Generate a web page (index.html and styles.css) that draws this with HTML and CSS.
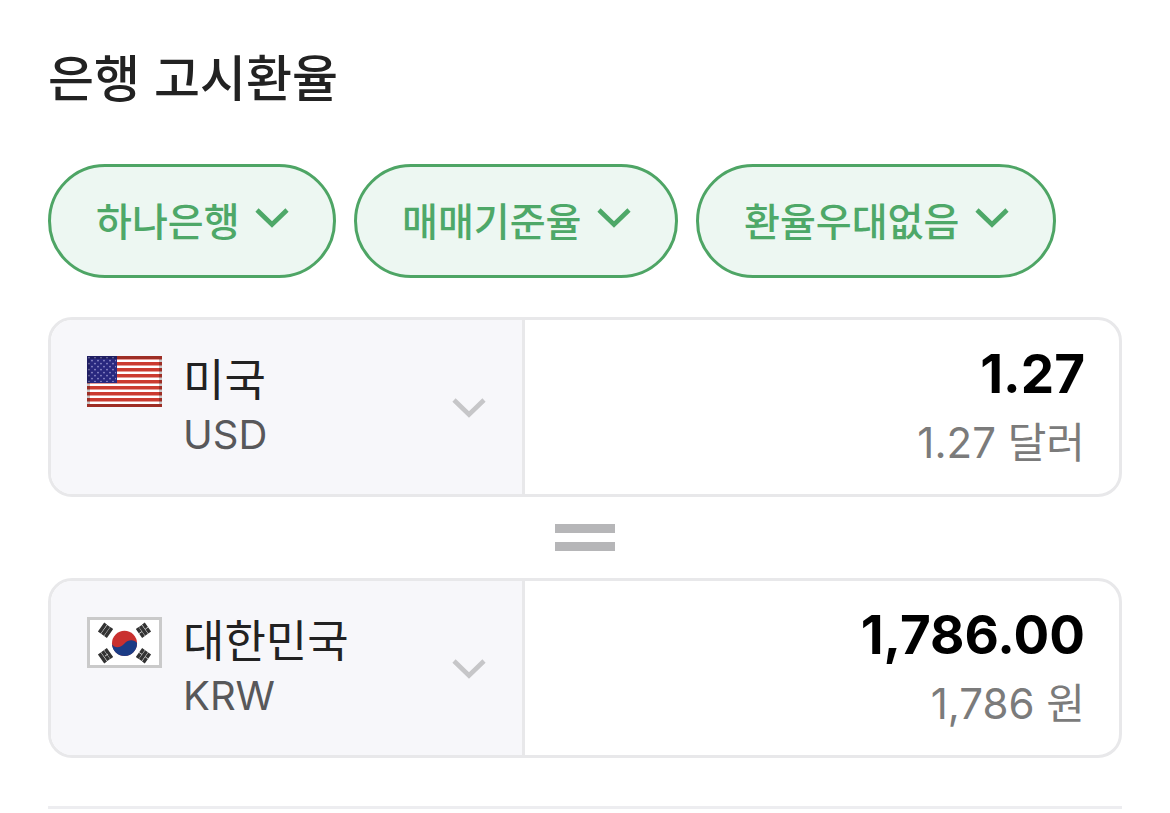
FILE: index.html
```html
<!DOCTYPE html>
<html lang="ko">
<head>
<meta charset="utf-8">
<meta name="viewport" content="width=device-width, initial-scale=1">
<title>은행 고시환율</title>
<link rel="stylesheet" href="styles.css">
</head>
<body>
<svg class="defs" aria-hidden="true">
  <symbol id="chevron" viewBox="0 0 34 22"><path d="M2 2 17 16.500 32 2" fill="none" stroke="currentColor" stroke-width="4.600"/></symbol>
</svg>
<main class="exchange">
  <h1 class="title">은행 고시환율</h1>
  <div class="filters">
    <label class="pill">
      <select class="pill-select" aria-label="은행"><option>하나은행</option></select>
      <svg class="chevron" aria-hidden="true"><use href="#chevron"/></svg>
    </label>
    <label class="pill">
      <select class="pill-select" aria-label="환율 종류"><option>매매기준율</option></select>
      <svg class="chevron" aria-hidden="true"><use href="#chevron"/></svg>
    </label>
    <label class="pill">
      <select class="pill-select" aria-label="환율우대"><option>환율우대없음</option></select>
      <svg class="chevron" aria-hidden="true"><use href="#chevron"/></svg>
    </label>
  </div>

  <section class="card">
    <label class="country">
      <svg class="flag" viewBox="0 0 75 51" aria-hidden="true">
        <defs>
          <pattern id="stars" width="6" height="6" patternUnits="userSpaceOnUse">
            <circle cx="2" cy="1.6" r=".9" fill="#8f8cc9"/><circle cx="5" cy="4.6" r=".9" fill="#8f8cc9"/>
          </pattern>
        </defs>
        <path fill="#fff" d="M0 0h75v51H0z"/>
        <path fill="#cb3b30" d="M0 0h75v3.500H0zM0 6h75v3.500H0zM0 12h75v3.500H0zM0 18h75v3.500H0zM0 24h75v3.500H0zM0 30h75v3.500H0zM0 36h75v3.500H0zM0 42h75v3.500H0zM0 48h75v3H0z"/>
        <path fill="#29287f" d="M0 0h30v27H0z"/>
        <path fill="url(#stars)" d="M1 1h28v25H1z"/>
        <path fill="none" stroke="#000" stroke-opacity=".22" stroke-width="3" d="M1.500 1.500h72v48h-72z"/>
      </svg>
      <span class="names">
        <select class="name" aria-label="통화"><option>미국</option></select>
        <span class="code">USD</span>
      </span>
      <svg class="chevron" aria-hidden="true"><use href="#chevron"/></svg>
    </label>
    <div class="amount">
      <input class="value" type="text" inputmode="decimal" value="1.27" aria-label="달러 금액">
      <p class="unit">1.27 달러</p>
    </div>
  </section>

  <div class="equals" role="img" aria-label="같음"></div>

  <section class="card">
    <label class="country">
      <svg class="flag" viewBox="0 0 75 51" aria-hidden="true">
        <path fill="#fff" stroke="#cacaca" stroke-width="3" d="M1.500 1.500h72v48h-72z"/>
        <circle cx="37.500" cy="26.300" r="12.500" fill="#c9302f"/>
        <path fill="#1b3c86" d="M25 27c3 5 9 3.500 12.500-.5s9.500-4.500 12.500-.5a12.500 12.500 0 0 1-25 1z"/>
        <g stroke="#333" stroke-width="3.400">
          <path d="M12.300 15.500 18.600 6.600M15.400 17.800l6.300-8.900M18.500 20l6.300-8.900"/>
          <path d="M62.700 15.500 56.400 6.600M59.600 17.800l-6.300-8.900M56.500 20l-6.300-8.900"/>
          <path d="M12.300 36.500l6.300 8.900M15.400 34.200l6.300 8.900M18.500 32l6.300 8.900"/>
          <path d="M62.700 36.500l-6.300 8.900M59.600 34.200l-6.300 8.900M56.500 32l-6.300 8.900"/>
        </g>
        <path stroke="#fff" stroke-opacity=".7" d="m52 16.600 3-2.100m3.200-2.300 3-2.100M52 35.400l3 2.100m3.200 2.300 3 2.100m-43.200-2.800 3-2.100"/>
      </svg>
      <span class="names">
        <select class="name" aria-label="통화"><option>대한민국</option></select>
        <span class="code">KRW</span>
      </span>
      <svg class="chevron" aria-hidden="true"><use href="#chevron"/></svg>
    </label>
    <div class="amount">
      <input class="value" type="text" inputmode="decimal" value="1,786.00" aria-label="원 금액">
      <p class="unit">1,786 원</p>
    </div>
  </section>
  <hr class="rule">
</main>
</body>
</html>
```
FILE: styles.css
```css
* { box-sizing: border-box; }

body {
  margin: 0;
  background: #fff;
  color: #222;
  font-family: Inter, "Noto Sans CJK KR", sans-serif;
}

.defs { display: none; }

.exchange { padding: 45px 48px 0; }

.title {
  margin: 0 0 59px;
  font: 500 50px/60px "Noto Sans CJK KR", sans-serif;
}

.filters {
  display: flex;
  gap: 18px;
  margin-bottom: 39px;
}

.pill {
  display: flex;
  align-items: center;
  gap: 15px;
  height: 114px;
  padding: 0 44px 4px 45px;
  border: 3px solid #4ea565;
  border-radius: 57px;
  background: #edf7f2;
  color: #4ea868;
}

.pill-select,
.name {
  appearance: none;
  margin: 0;
  padding: 0;
  border: 0;
  background: none;
  color: inherit;
}

.pill-select { font: 500 39px/60px "Noto Sans CJK KR", sans-serif; }

.chevron {
  flex: none;
  width: 34px;
  height: 22px;
  pointer-events: none;
}

.card {
  display: flex;
  min-height: 180px;
  border: 3px solid #e8e8ea;
  border-radius: 24px;
  overflow: hidden;
}

.country {
  display: flex;
  align-items: flex-start;
  width: 44.4%;
  padding: 36px 36px 32px;
  border-right: 3px solid #e8e8ea;
  background: #f7f7fa;
}

.country .chevron {
  align-self: center;
  margin-left: auto;
  color: #c6c6c8;
}

.flag {
  flex: none;
  width: 75px;
  height: 51px;
  margin-right: 21px;
}

.names {
  display: flex;
  flex-direction: column;
  align-items: flex-start;
}

.name {
  height: 52px;
  font: 400 45px/44px "Noto Sans CJK KR", sans-serif;
  padding-bottom: 8px;
}

.code {
  color: #58585a;
  font-size: 40px;
  line-height: 54px;
}

.amount {
  flex: 1;
  min-width: 0;
  padding: 24px 34px 20px;
  text-align: right;
}

.value {
  display: block;
  width: 100%;
  height: 60px;
  margin: 0;
  padding: 0;
  border: 0;
  background: none;
  color: #000;
  font: 700 53px/60px Inter, sans-serif;
  text-align: right;
}

.unit {
  margin: 9px 0 0;
  color: #7b7b7b;
  font-size: 42px;
  line-height: 60px;
}

.equals {
  width: 60px;
  height: 27px;
  margin: 27px auto;
  border: solid #b6b6b8;
  border-width: 9px 0;
}

.rule {
  height: 3px;
  margin: 48px 0 0;
  border: 0;
  background: #ededf0;
}
```
